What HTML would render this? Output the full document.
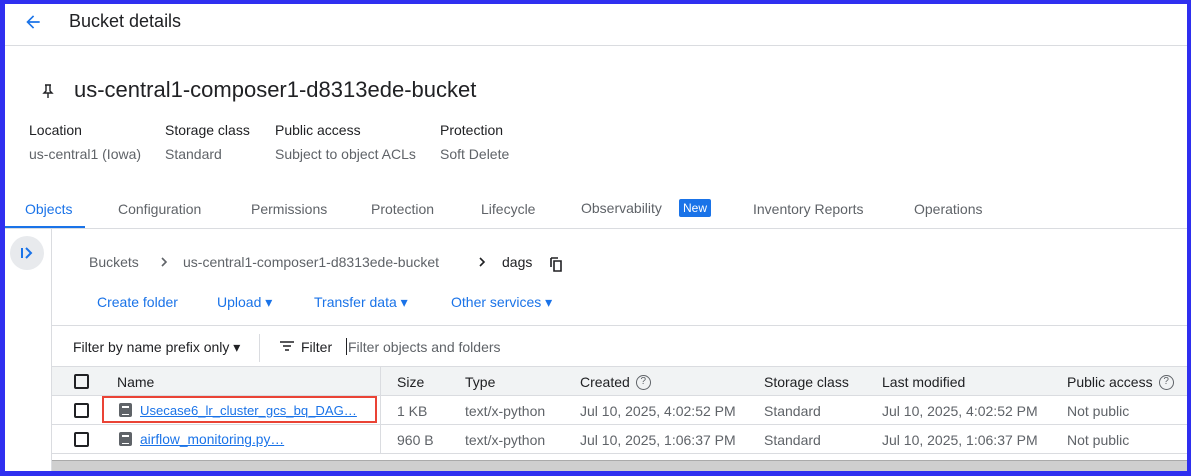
<!DOCTYPE html>
<html><head><style>
*{margin:0;padding:0;box-sizing:border-box}
body{width:1191px;height:476px;overflow:hidden;background:#2f2ff0;font-family:"Liberation Sans",Arial,sans-serif;color:#202124}
#w{position:absolute;left:5px;top:4px;width:1182px;height:467px;background:#fff;overflow:hidden}
.a{position:absolute;white-space:nowrap}
.g{color:#5f6368}
.b{color:#1a73e8}
.cb{position:absolute;width:15px;height:15px;border:2px solid #202124;border-radius:2px}
.t{font-size:14px}
.q{display:inline-block;width:15px;height:15px;border:1.5px solid #5f6368;border-radius:50%;font-size:10px;text-align:center;line-height:12px;color:#5f6368;vertical-align:middle;margin-left:6px;position:relative;top:-1px}
.fi{position:absolute;width:13px;height:14px;background:#5f6368;border-radius:2px}
.fi:after{content:"";position:absolute;left:3px;top:3px;width:7px;height:7px;border-top:1.5px solid #fff;border-bottom:1.5px solid #fff;box-shadow:0 3px 0 -2px #fff inset}
</style></head><body>
<div id="w">
<svg class="a" style="left:18px;top:8px" width="20" height="20" viewBox="0 0 24 24"><path d="M20 11H7.8l5.6-5.6L12 4l-8 8 8 8 1.4-1.4L7.8 13H20z" fill="#1a73e8"/></svg>
<div class="a" style="left:64px;top:7px;font-size:18px">Bucket details</div>
<div class="a" style="left:0;top:41px;width:1182px;height:1px;background:#dadce0"></div>
<svg class="a" style="left:37px;top:79px" width="12" height="16" viewBox="0 0 12 16"><path d="M3 2h6M4 2v6L2 10h8L8 8V2M6 10v5" stroke="#202124" stroke-width="1.4" fill="none"/></svg>
<div class="a" style="left:69px;top:73px;font-size:22px">us-central1-composer1-d8313ede-bucket</div>
<div class="a t" style="left:24px;top:118px">Location</div>
<div class="a t" style="left:160px;top:118px">Storage class</div>
<div class="a t" style="left:270px;top:118px">Public access</div>
<div class="a t" style="left:435px;top:118px">Protection</div>
<div class="a t g" style="left:24px;top:142px">us-central1 (Iowa)</div>
<div class="a t g" style="left:160px;top:142px">Standard</div>
<div class="a t g" style="left:270px;top:142px">Subject to object ACLs</div>
<div class="a t g" style="left:435px;top:142px">Soft Delete</div>
<div class="a t b" style="left:20px;top:197px">Objects</div>
<div class="a t g" style="left:113px;top:197px">Configuration</div>
<div class="a t g" style="left:246px;top:197px">Permissions</div>
<div class="a t g" style="left:366px;top:197px">Protection</div>
<div class="a t g" style="left:476px;top:197px">Lifecycle</div>
<div class="a t g" style="left:576px;top:196px">Observability</div>
<div class="a" style="left:674px;top:195px;background:#1a73e8;color:#fff;font-size:12px;padding:2px 4px;border-radius:2px">New</div>
<div class="a t g" style="left:748px;top:197px">Inventory Reports</div>
<div class="a t g" style="left:909px;top:197px">Operations</div>
<div class="a" style="left:0;top:222px;width:80px;height:2px;background:#1a73e8"></div>
<div class="a" style="left:0;top:224px;width:1182px;height:1px;background:#dadce0"></div>
<div class="a" style="left:46px;top:225px;width:1px;height:250px;background:#dadce0"></div>
<div class="a" style="left:5px;top:232px;width:34px;height:34px;border-radius:50%;background:#e8eaed"></div>
<svg class="a" style="left:13px;top:240px" width="18" height="18" viewBox="0 0 18 18"><path d="M4 4v10M8 4l5 5-5 5" stroke="#1a73e8" stroke-width="2" fill="none"/></svg>
<div class="a t g" style="left:84px;top:250px">Buckets</div>
<svg class="a" style="left:154px;top:252px" width="10" height="12" viewBox="0 0 10 12"><path d="M3 2l4 4-4 4" stroke="#5f6368" stroke-width="1.6" fill="none"/></svg>
<div class="a t g" style="left:178px;top:250px">us-central1-composer1-d8313ede-bucket</div>
<svg class="a" style="left:472px;top:252px" width="10" height="12" viewBox="0 0 10 12"><path d="M3 2l4 4-4 4" stroke="#202124" stroke-width="1.6" fill="none"/></svg>
<div class="a t" style="left:497px;top:250px">dags</div>
<svg class="a" style="left:544px;top:252px" width="14" height="16" viewBox="0 0 14 16"><path d="M2 2h7M2 2v9M5 5h7v10H5z" stroke="#202124" stroke-width="1.6" fill="none"/></svg>
<div class="a t b" style="left:92px;top:290px">Create folder</div>
<div class="a t b" style="left:212px;top:290px">Upload ▾</div>
<div class="a t b" style="left:309px;top:290px">Transfer data ▾</div>
<div class="a t b" style="left:446px;top:290px">Other services ▾</div>
<div class="a" style="left:47px;top:321px;width:1135px;height:1px;background:#dadce0"></div>
<div class="a t" style="left:68px;top:335px">Filter by name prefix only ▾</div>
<div class="a" style="left:254px;top:330px;width:1px;height:28px;background:#dadce0"></div>
<svg class="a" style="left:274px;top:335px" width="16" height="14" viewBox="0 0 16 14"><path d="M1 3h14M4 7h8M6 11h4" stroke="#202124" stroke-width="1.6"/></svg>
<div class="a t" style="left:296px;top:335px">Filter</div>
<div class="a" style="left:341px;top:334px;width:1px;height:17px;background:#202124"></div>
<div class="a t g" style="left:343px;top:335px">Filter objects and folders</div>
<div class="a" style="left:47px;top:362px;width:1135px;height:30px;background:#f1f3f4;border-top:1px solid #dadce0"></div>
<div class="a" style="left:47px;top:391px;width:1135px;height:1px;background:#dadce0"></div>
<div class="a" style="left:47px;top:420px;width:1135px;height:1px;background:#dadce0"></div>
<div class="a" style="left:47px;top:449px;width:1135px;height:1px;background:#dadce0"></div>
<div class="a" style="left:375px;top:362px;width:1px;height:88px;background:#dadce0"></div>
<div class="a" style="left:47px;top:456px;width:1135px;height:11px;background:#cfcfcf;border-top:1px solid #aaa"></div>
<div class="cb" style="left:69px;top:370px"></div>
<div class="cb" style="left:69px;top:399px"></div>
<div class="cb" style="left:69px;top:428px"></div>
<div class="a t" style="left:112px;top:370px">Name</div>
<div class="a t" style="left:392px;top:370px">Size</div>
<div class="a t" style="left:460px;top:370px">Type</div>
<div class="a t" style="left:575px;top:370px">Created<span class="q">?</span></div>
<div class="a t" style="left:759px;top:370px">Storage class</div>
<div class="a t" style="left:877px;top:370px">Last modified</div>
<div class="a t" style="left:1062px;top:370px">Public access<span class="q">?</span></div>
<div class="a" style="left:97px;top:392px;width:275px;height:27px;border:2px solid #ea4335"></div>
<div class="fi" style="left:114px;top:399px"></div>
<div class="fi" style="left:114px;top:428px"></div>
<div class="a b" style="left:135px;top:399px;font-size:13.1px;text-decoration:underline">Usecase6_lr_cluster_gcs_bq_DAG…</div>
<div class="a b" style="left:135px;top:428px;font-size:13.8px;text-decoration:underline">airflow_monitoring.py…</div>
<div class="a t g" style="left:392px;top:399px">1 KB</div>
<div class="a t g" style="left:392px;top:428px">960 B</div>
<div class="a t g" style="left:460px;top:399px">text/x-python</div>
<div class="a t g" style="left:460px;top:428px">text/x-python</div>
<div class="a t g" style="left:575px;top:399px">Jul 10, 2025, 4:02:52 PM</div>
<div class="a t g" style="left:575px;top:428px">Jul 10, 2025, 1:06:37 PM</div>
<div class="a t g" style="left:759px;top:399px">Standard</div>
<div class="a t g" style="left:759px;top:428px">Standard</div>
<div class="a t g" style="left:877px;top:399px">Jul 10, 2025, 4:02:52 PM</div>
<div class="a t g" style="left:877px;top:428px">Jul 10, 2025, 1:06:37 PM</div>
<div class="a t g" style="left:1062px;top:399px">Not public</div>
<div class="a t g" style="left:1062px;top:428px">Not public</div>
</div>
</body></html>
